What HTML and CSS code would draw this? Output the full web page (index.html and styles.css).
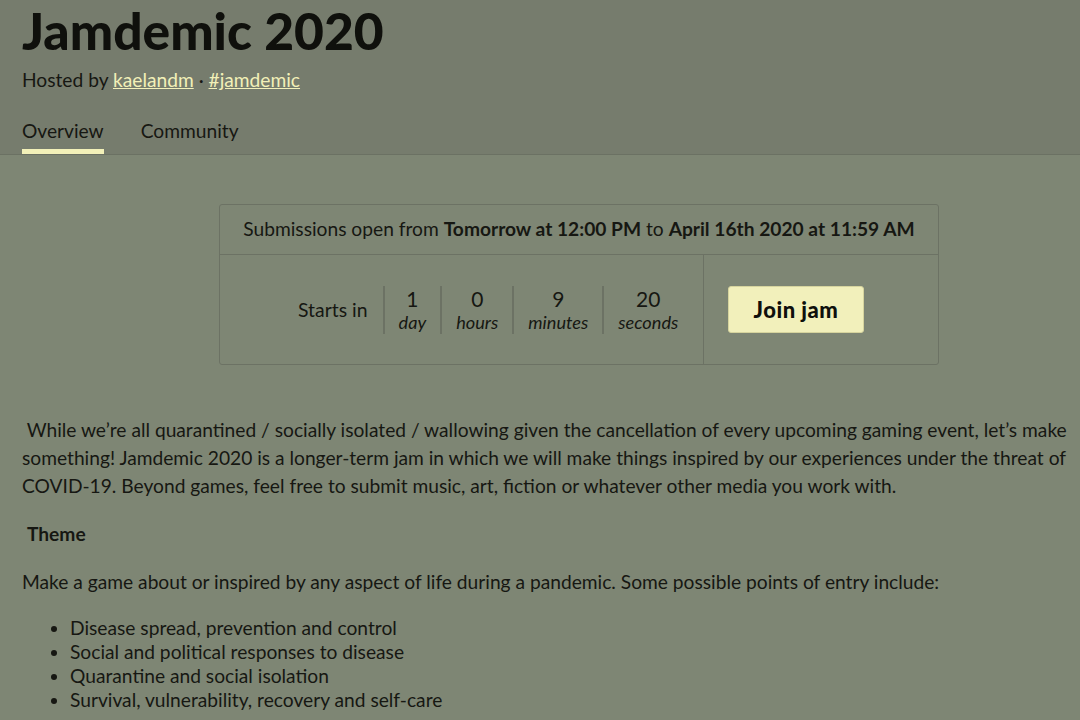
FILE: index.html
```html
<!DOCTYPE html>
<html>
  <head>
    <title>Jamdemic 2020</title>
    <link rel="stylesheet" href="styles.css">
  </head>
  <body>
    <header class="jam-header">
      <h1>Jamdemic 2020</h1>
      <div class="hosted">Hosted by <a href="#">kaelandm</a> &middot; <a href="#">#jamdemic</a></div>
      <nav class="tabs">
        <a class="tab active" href="#">Overview</a>
        <a class="tab" href="#">Community</a>
      </nav>
    </header>

    <main class="jam-body">
      <div class="dates-box">
        <div class="dates-row">
          Submissions open from <strong>Tomorrow at 12:00 PM</strong> to <strong>April 16th 2020 at 11:59 AM</strong>
        </div>
        <div class="countdown-row">
          <div class="countdown">
            <span class="starts">Starts in</span>
            <div class="unit"><span class="num">1</span><span class="label">day</span></div>
            <div class="unit"><span class="num">0</span><span class="label">hours</span></div>
            <div class="unit"><span class="num">9</span><span class="label">minutes</span></div>
            <div class="unit"><span class="num">20</span><span class="label">seconds</span></div>
          </div>
          <div class="join-cell">
            <button class="join-btn">Join jam</button>
          </div>
        </div>
      </div>

      <div class="description">
        <p>&nbsp;While we’re all quarantined / socially isolated / wallowing given the cancellation of every upcoming gaming event, let’s make something! Jamdemic 2020 is a longer-term jam in which we will make things inspired by our experiences under the threat of COVID-19. Beyond games, feel free to submit music, art, fiction or whatever other media you work with.</p>
        <p>&nbsp;<strong>Theme</strong></p>
        <p>Make a game about or inspired by any aspect of life during a pandemic. Some possible points of entry include:</p>
        <ul>
          <li>Disease spread, prevention and control</li>
          <li>Social and political responses to disease</li>
          <li>Quarantine and social isolation</li>
          <li>Survival, vulnerability, recovery and self-care</li>
        </ul>
      </div>
    </main>
  </body>
</html>
```

FILE: styles.css
```css
body {
  margin: 0;
  background-color: #7e8674;
  color: #161712;
  font-family: Lato, "Open Sans", sans-serif;
  font-size: 19.2px;
  overflow: hidden;
}

a {
  color: #f2f0b8;
}

.jam-header {
  background-color: #767c6d;
  border-bottom: 1px solid #6b7163;
  padding: 0 22px;
}

.jam-header h1 {
  margin: 0;
  padding-top: 2px;
  font-size: 51.5px;
  line-height: 56px;
  font-weight: 900;
  color: #0f100c;
}

.hosted {
  margin-top: 10px;
  line-height: 24px;
}

.tabs {
  display: flex;
  gap: 37px;
  margin-top: 27px;
}

.tab {
  color: #161712;
  text-decoration: none;
  line-height: 24px;
  padding-bottom: 6px;
  border-bottom: 5px solid transparent;
}

.tab.active {
  border-bottom-color: #f2f0b8;
}

.jam-body {
  padding: 0 10px 0 22px;
}

.dates-box {
  width: 718px;
  margin: 49px 0 0 197px;
  border: 1px solid #6c7264;
  border-radius: 3px;
}

.dates-row {
  text-align: center;
  line-height: 24px;
  padding: 12px 0 13px;
  border-bottom: 1px solid #6c7264;
}

.dates-row strong {
  font-weight: 700;
}

.countdown-row {
  display: flex;
  height: 109px;
}

.countdown {
  width: 484px;
  border-right: 1px solid #6c7264;
  display: flex;
  align-items: center;
  padding-left: 78px;
  box-sizing: border-box;
}

.starts {
  font-size: 19.4px;
  padding-right: 15px;
}

.unit {
  display: flex;
  flex-direction: column;
  align-items: center;
  border-left: 2px solid #6c7264;
  padding: 0 14px;
  height: 48px;
  justify-content: center;
}

.num {
  font-size: 21px;
  line-height: 24px;
}

.label {
  font-style: italic;
  font-size: 18.2px;
  line-height: 22px;
}

.join-cell {
  display: flex;
  align-items: center;
  padding-left: 24px;
}

.join-btn {
  font-family: Lato, "Open Sans", sans-serif;
  font-size: 22px;
  letter-spacing: 0.5px;
  font-weight: 900;
  color: #0f100c;
  background-color: #f2f0bb;
  border: 1px solid #d6d49e;
  border-radius: 3px;
  width: 136px;
  height: 47px;
  padding: 0;
}

.description {
  margin-top: 51px;
}

.description p {
  margin: 0 0 20px;
  line-height: 28px;
}

.description ul {
  margin: 0;
  padding-left: 48px;
  line-height: 24px;
}
```
